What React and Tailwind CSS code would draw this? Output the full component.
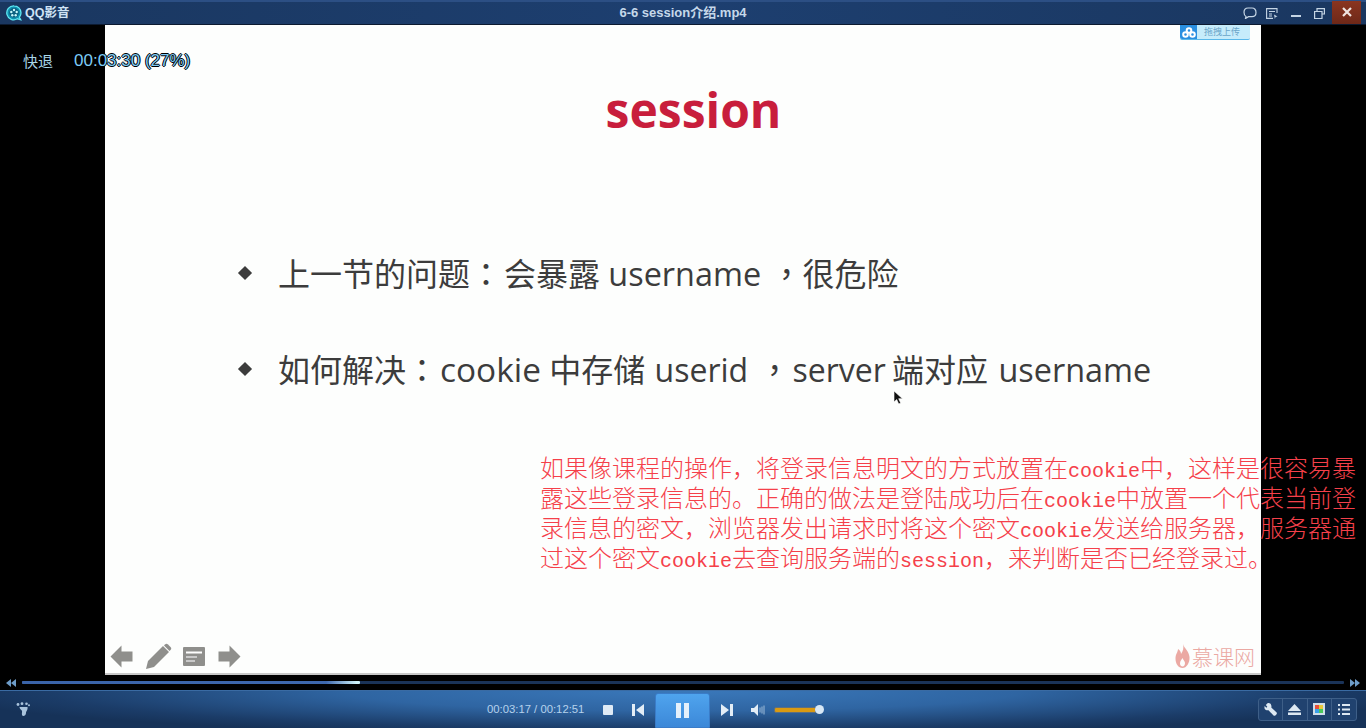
const cjk = '"Noto Sans CJK SC", sans-serif';
const ui = '"Liberation Sans", "Noto Sans CJK SC", sans-serif';

function Logo() {
  return (
    <svg width="16" height="16" viewBox="0 0 16 16">
      <path d="M8 .8a7 7 0 0 1 7 7c0 1.800-.6 3.400-1.600 4.500l1.300 2.500-3.300-1A7 7 0 1 1 8 .8z" fill="#0e8fae" stroke="#5fe8f2" strokeWidth="1.300" />
      <circle cx="8" cy="7.800" r="4.800" fill="#0a5d7e" />
      <circle cx="8" cy="5" r="1.200" fill="#c4f8fb" />
      <circle cx="5.300" cy="7" r="1.200" fill="#c4f8fb" />
      <circle cx="10.700" cy="7" r="1.200" fill="#c4f8fb" />
      <circle cx="6.300" cy="10.300" r="1.200" fill="#c4f8fb" />
      <circle cx="9.700" cy="10.300" r="1.200" fill="#c4f8fb" />
    </svg>
  );
}

function TitleBar() {
  return (
    <div className="h-[25px] shrink-0 flex items-center relative border-t-2 border-t-[#2c4f84] border-b border-b-[#0c1a30] bg-[linear-gradient(90deg,#1a3760_0%,#1d3f70_50%,#1a3760_100%)]">
      <div className="ml-[6px]"><Logo /></div>
      <span className="ml-[3px] text-[12.5px] font-bold text-[#cfe3f5]" style={{ fontFamily: ui }}>QQ影音</span>
      <span className="absolute left-0 right-0 text-center text-[13px] font-bold text-[#c5d8ea]" style={{ fontFamily: ui }}>6-6 session介绍.mp4</span>
      <div className="ml-auto flex items-center h-full">
        <svg width="14" height="12" viewBox="0 0 14 12" className="mr-[9px]" fill="none" stroke="#c5d5e5" strokeWidth="1.200">
          <path d="M3 9.500 2.500 11.500 5.500 9.700H9c2.500 0 4-1.500 4-4.200S11.500 1 9 1H5C2.500 1 1 2.700 1 5.300 1 7.300 1.700 8.800 3 9.500z" />
        </svg>
        <svg width="12" height="11" viewBox="0 0 12 11" className="mr-[13px]" fill="none" stroke="#c5d5e5" strokeWidth="1.100">
          <path d="M11 5V.600H.600v9.800H7M3 3.500h6M3 6h3M3 8h3" />
          <path d="M8 6.500l3.500 2-2 .6-.6 1.800z" fill="#c5d5e5" stroke="none" />
        </svg>
        <div className="w-[10px] h-[2px] bg-[#c5d5e5] mt-[5px] mr-[13px]" />
        <svg width="11" height="11" viewBox="0 0 11 11" className="mr-[7px]" fill="none" stroke="#c5d5e5" strokeWidth="1.200">
          <path d="M3 3V.600h7.400V6H8M.600 3.500H8v7H.600z" />
        </svg>
        <div className="w-[29px] h-[23px] mr-[5px] -mt-[2px] flex items-center justify-center bg-[linear-gradient(180deg,#8a3520,#6e2818)]">
          <svg width="10" height="10" viewBox="0 0 10 10" stroke="#f0e4e0" strokeWidth="2.200"><path d="M1 1l8 8M9 1 1 9" /></svg>
        </div>
      </div>
    </div>
  );
}

function P({ children }) {
  return <span style={{ fontFamily: '"Noto Sans CJK TC", sans-serif' }}>{children}</span>;
}

function Bullet({ children }) {
  return (
    <div className="flex items-center h-[48px] text-[32px] text-[#3c3c3c] whitespace-nowrap" style={{ fontFamily: '"Open Sans", "Noto Sans CJK SC", sans-serif' }}>
      <span className="w-[13px] h-[13px] mr-[27px] flex items-center justify-center">
        <span className="block w-[10px] h-[10px] rotate-45 bg-[#3c3c3c]" />
      </span>
      <span>{children}</span>
    </div>
  );
}

function Slide() {
  return (
    <div className="w-[1156px] shrink-0 relative flex flex-col bg-[#fdfefd] border-b-2 border-b-[#c8c8c8]">
      <div className="absolute right-[11px] top-0 w-[70px] h-[15px] flex items-center rounded-b-[2px] bg-[#c6ecfb] border-b border-[#5ab8ea]">
        <div className="w-[17px] h-full bg-[#2a8fe0] rounded-bl-[2px] flex items-center justify-center">
          <svg width="14" height="11" viewBox="0 0 14 11" fill="none" stroke="#fff" strokeWidth="2"><circle cx="7" cy="3.500" r="2.300" /><circle cx="3.500" cy="7.500" r="2.300" /><circle cx="10.500" cy="7.500" r="2.300" /></svg>
        </div>
        <span className="ml-[7px] text-[9px] text-[#6aa5c9]" style={{ fontFamily: cjk }}>拖拽上传</span>
      </div>

      <div className="pl-[21px] text-center mt-[54px] h-[62px] text-[48px] leading-[62px] font-bold text-[#c81e3c]" style={{ fontFamily: '"Open Sans", sans-serif' }}>session</div>

      <div className="ml-[133px] mt-[108px] flex flex-col gap-[48px]">
        <Bullet>上一节的问题<P>：</P><span className="ml-[2px]">会暴露</span> <span className="text-[32.4px]">username</span> <span className="ml-[1px]"><P>，</P></span>很危险</Bullet>
        <Bullet>如何解决<P>：</P><span className="text-[33.4px] ml-[2px]">cookie</span> 中存储 <span className="ml-[1px]">userid</span> <span className="ml-[2px]"><P>，</P></span><span className="ml-[2px]">server</span> <span className="-ml-[2px]">端对应</span> <span className="ml-[2px] text-[32.4px]">username</span></Bullet>
      </div>

      <svg width="11" height="15" viewBox="0 0 11 15" className="absolute left-[788px] top-[365px]">
        <path d="M1 1v11l2.700-2.500 2 4.500 2-1-2-4.300H9.500z" fill="#111" stroke="#fff" strokeWidth=".6" />
      </svg>

      <div className="mt-auto mb-[3px] flex items-center pl-[5px] pr-[6px]">
        <svg width="23" height="23" viewBox="0 0 23 23" fill="#8f8f8c"><path d="M.5 11.500 11.500.5v6h11v10h-11v6z" /></svg>
        <svg width="27" height="27" viewBox="0 0 27 27" fill="#8f8f8c" className="ml-[12px]"><path d="M1 26l2-8L18 3l6 6L9 24z" /><path d="M20 1.500c1-1 2-1 3 0l2.500 2.500c1 1 1 2 0 3L24.500 8l-5.500-5.500z" /></svg>
        <svg width="22" height="19" viewBox="0 0 22 19" className="ml-[11px]"><rect width="22" height="19" rx="1" fill="#8f8f8c" /><path d="M3 5.500h16" stroke="#fff" strokeWidth="2" /><path d="M3 10h11M3 14h9" stroke="#ddd" strokeWidth="1.500" /></svg>
        <svg width="23" height="23" viewBox="0 0 23 23" fill="#8f8f8c" className="ml-[13px]"><path d="M22.500 11.500 11.500.5v6H.5v10h11v6z" /></svg>
        <div className="ml-auto flex items-center">
          <svg width="15" height="25" viewBox="0 0 15 25" fill="#eba9a3"><path d="M8 0c1 4 6 7 6.500 13 .4 6-3 11-7 11S.5 20 .5 14.500C.5 10 3 8 3 5c2 1 3 3 3 5 2-3 3-6 2-10zM7.500 14c-1 2-2.500 3-2.500 5.500 0 2 1.200 3 2.600 3S10 21 10 19c0-2-2-3-2.500-5z" /></svg>
          <span className="ml-[2px] text-[21px] leading-[25px] text-[#eba9a3] font-light" style={{ fontFamily: cjk }}>慕课网</span>
        </div>
      </div>
    </div>
  );
}

function SeekRow() {
  return (
    <div className="h-[15px] shrink-0 bg-black flex items-center pl-[6px] pr-[6px]">
      <svg width="10" height="8" viewBox="0 0 10 8" fill="#6d9cc8"><path d="M5 0v8L0 4zM10 0v8L5 4z" /></svg>
      <div className="ml-[6px] flex-1 h-[3px] rounded-[1px] bg-[#1a3358]">
        <div className="h-full w-[338px] rounded-[1px] bg-[linear-gradient(90deg,#3a63a8_0%,#3e68ae_90%,#cdf2fa_99%)]" />
      </div>
      <svg width="10" height="8" viewBox="0 0 10 8" fill="#6d9cc8" className="ml-[6px]"><path d="M0 0v8l5-4zM5 0v8l5-4z" /></svg>
    </div>
  );
}

function ToolCell({ children, last }) {
  return <div className={'w-[25px] h-full flex items-center justify-center' + (last ? '' : ' border-r border-r-[#3e5f88]')}>{children}</div>;
}

function ControlBar() {
  return (
    <div className="h-[38px] shrink-0 flex items-center relative border-t border-t-[#3a6ba3] bg-[radial-gradient(ellipse_55%_120%_at_50%_0%,#3a78ba_0%,#2f65a2_45%,#1b3c68_85%,#163258_100%)]">
      <svg width="14" height="15" viewBox="0 0 14 15" fill="#a9c3dc" className="ml-[16px]">
        <circle cx="2" cy="2.500" r="1.400" /><circle cx="6" cy="1.700" r="1.400" /><circle cx="10.500" cy="1.700" r="1.300" /><circle cx="13" cy="3.200" r="1" />
        <path d="M3.500 5h8c.5 3-1.500 4-1.500 6 0 3-3.500 4-4 2-.4-2 .5-3-.2-4.500C4.800 7.500 3.500 6.500 3.500 5z" />
      </svg>
      <span className="ml-[457px] w-[99px] whitespace-nowrap text-[11.3px] text-[#b6d2ec]" style={{ fontFamily: '"Liberation Sans", sans-serif' }}>00:03:17 / 00:12:51</span>
      <div className="ml-[17px] w-[10px] h-[10px] rounded-[1px] bg-[#dfeaf5]" />
      <svg width="12" height="12" viewBox="0 0 12 12" fill="#e3edf6" className="ml-[19px]"><path d="M0 0h3v12H0zM12 0v12L4 6z" /></svg>
      <div className="ml-[11px] w-[55px] h-[35px] self-end rounded-t-[3px] border border-[#3a7cc8] flex items-center justify-center gap-[3px] bg-[linear-gradient(180deg,#4fa4ee,#3c88d8)]">
        <div className="w-[5px] h-[15px] bg-[#e4f0fb]" />
        <div className="w-[5px] h-[15px] bg-[#e4f0fb]" />
      </div>
      <svg width="12" height="12" viewBox="0 0 12 12" fill="#e3edf6" className="ml-[11px]"><path d="M0 0v12l8-6zM9 0h3v12H9z" /></svg>
      <svg width="14" height="12" viewBox="0 0 14 12" className="ml-[18px]"><path d="M0 4h3l4-4v12L3 8H0z" fill="#e3edf6" /><path d="M9 3.500v5M11 2.500v7M13 1.500v9" stroke="#9fbcd8" strokeWidth="1" /></svg>
      <div className="ml-[9px] w-[40px] h-[4px] rounded-l-[2px] bg-[#d99a12] border border-[#5e6f80] box-content" />
      <div className="-ml-[1px] w-[9px] h-[9px] rounded-full bg-[#d8e8f6]" />
      <div className="ml-auto mr-[9px] w-[99px] h-[23px] flex items-center rounded-[3px] border border-[#3e5f88] bg-[#20426f] -mt-[1px]">
        <ToolCell>
          <svg width="13" height="13" viewBox="0 0 13 13" fill="#dce8f2"><path d="M3.500.3 1.800 2l1.500 1.700-1 1L.7 3.100C0 5 .7 6.800 2.500 7.200c.8.200 1.500.1 2 0l4.800 5.100c.7.700 1.600.7 2.300 0l.8-.8c.7-.7.7-1.600 0-2.300L7.300 4.400c.2-.6.200-1.300 0-2C6.800.6 5.200-.3 3.500.3z" /></svg>
        </ToolCell>
        <ToolCell>
          <svg width="13" height="11" viewBox="0 0 13 11" fill="#dce8f2"><path d="M6.500 0 13 7H0zM0 8.500h13V11H0z" /></svg>
        </ToolCell>
        <ToolCell>
          <svg width="12" height="12" viewBox="0 0 12 12"><rect width="12" height="12" fill="#cfdde9" /><rect x="2" y="2" width="4" height="4" fill="#e8503a" /><rect x="6" y="2" width="4" height="4" fill="#e8c83a" /><rect x="2" y="6" width="4" height="4" fill="#3aa0e8" /><rect x="6" y="6" width="4" height="4" fill="#4ac85a" /></svg>
        </ToolCell>
        <ToolCell last>
          <svg width="12" height="11" viewBox="0 0 12 11" fill="#dce8f2"><path d="M0 0h2v2H0zM4 0h8v2H4zM0 4.500h2v2H0zM4 4.500h8v2H4zM0 9h2v2H0zM4 9h8v2H4z" /></svg>
        </ToolCell>
      </div>
    </div>
  );
}

export default function App() {
  const redLines = [
    ['如果像课程的操作，将登录信息明文的方式放置在', 'cookie', '中，这样是很容易暴'],
    ['露这些登录信息的。正确的做法是登陆成功后在', 'cookie', '中放置一个代表当前登'],
    ['录信息的密文，浏览器发出请求时将这个密文', 'cookie', '发送给服务器，服务器通'],
    ['过这个密文', 'cookie', '去查询服务端的', 'session', '，来判断是否已经登录过。'],
  ];
  return (
    <div className="w-[1366px] h-[728px] overflow-hidden flex flex-col bg-black relative">
      <TitleBar />
      <div className="flex-1 flex justify-center min-h-0 relative bg-black">
        <Slide />
        <div className="absolute left-[23px] top-[26px] flex items-center leading-[20px] whitespace-nowrap">
          <span className="text-[15px] text-[#a9d6e8] w-[51px]" style={{ fontFamily: cjk }}>快退</span>
          <span className="text-[#7ccbf5] text-[17px] [text-shadow:1px_0_#000,-1px_0_#000,0_1px_#000,0_-1px_#000]" style={{ fontFamily: '"Liberation Sans", sans-serif' }}>00:03:30 (27%)</span>
        </div>
        <div className="absolute left-[540px] top-[427px] text-[24px] text-[#f5404a] font-light whitespace-nowrap" style={{ fontFamily: cjk }}>
          {redLines.map((parts, i) => (
            <div key={i} className="h-[30px] leading-[30px]">
              {parts.map((p, j) => /^[a-z]+$/.test(p)
                ? <span key={j} className="text-[20px] leading-[20px]" style={{ fontFamily: '"Liberation Mono", monospace' }}>{p}</span>
                : <span key={j}>{p}</span>)}
            </div>
          ))}
        </div>
      </div>
      <SeekRow />
      <ControlBar />
    </div>
  );
}
